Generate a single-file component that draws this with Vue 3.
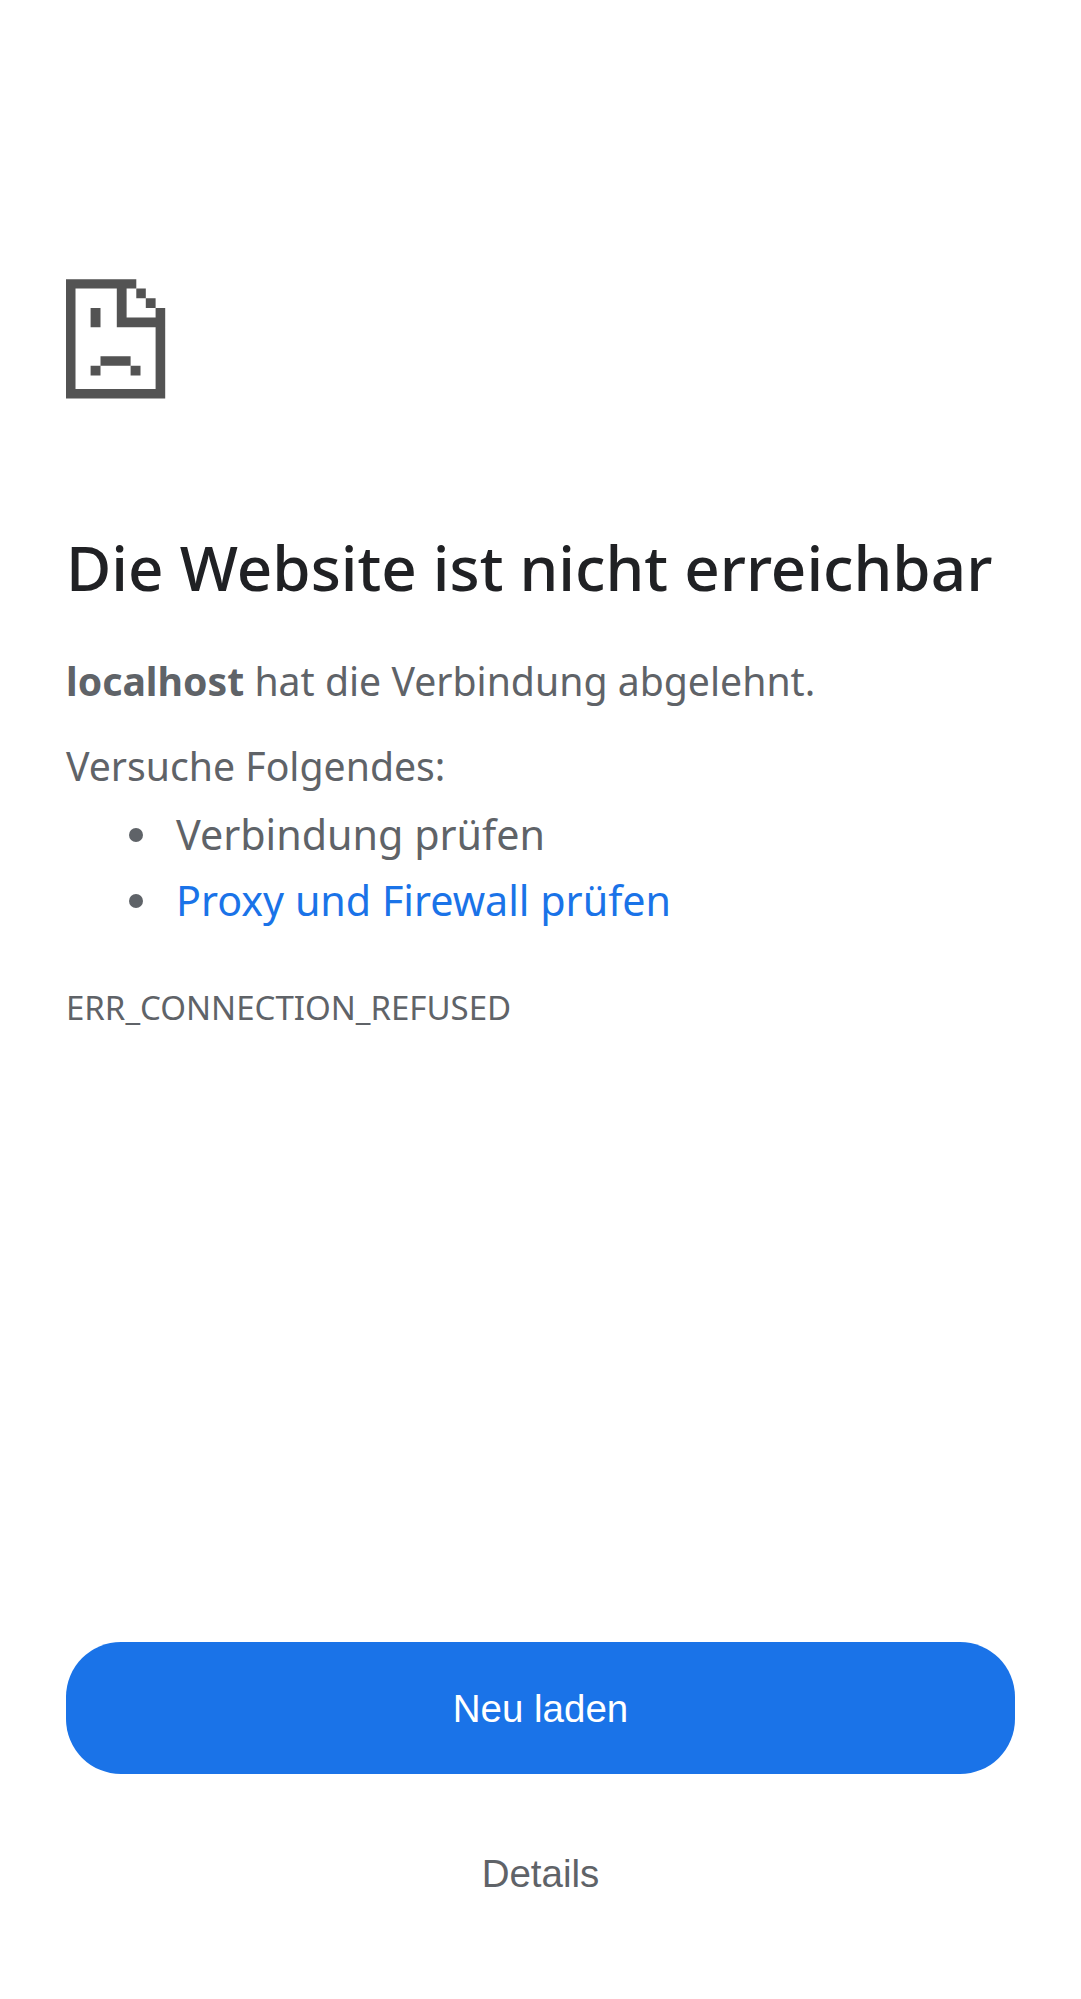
<script setup>
const suggestions = [
  { text: 'Verbindung prüfen', link: false },
  { text: 'Proxy und Firewall prüfen', link: true },
]
</script>

<template>
  <div class="page">
    <main class="content">
      <svg class="icon" width="100" height="120" viewBox="66 279 100 120" aria-hidden="true">
        <path
          fill="#535353"
          fill-rule="evenodd"
          d="M66 279.2H136.3V288.6H126.6V317.5H155.6V307.9H165.2V398.5H66ZM75.5 288.6V389.1H155.6V327.2H116.8V288.6Z"
        />
        <path
          fill="#535353"
          d="M136.3 288.6H145.8V298.3H136.3ZM145.8 298.3H155.6V307.9H145.8ZM90.6 307.9H100.5V327.2H90.6ZM100.5 356.2H130.6V365.7H100.5ZM90.6 365.7H100.5V375.5H90.6ZM130.6 365.7H140.5V375.5H130.6Z"
        />
      </svg>
      <h1>Die Website ist nicht erreichbar</h1>
      <p class="summary"><strong>localhost</strong> hat die Verbindung abgelehnt.</p>
      <p class="try">Versuche Folgendes:</p>
      <ul>
        <li v-for="item in suggestions" :key="item.text">
          <a v-if="item.link">{{ item.text }}</a>
          <span v-else>{{ item.text }}</span>
        </li>
      </ul>
      <div class="code">ERR_CONNECTION_REFUSED</div>
    </main>
    <div class="buttons">
      <button class="reload">Neu laden</button>
      <button class="details">Details</button>
    </div>
  </div>
</template>

<style>
body {
  margin: 0;
  background: #fff;
}
</style>

<style scoped>
.page {
  box-sizing: border-box;
  height: 1999px;
  padding: 279px 66px 59px;
  display: flex;
  flex-direction: column;
  justify-content: space-between;
  color: #5f6368;
  font-family: 'Noto Sans', sans-serif;
}
.icon {
  display: block;
}
h1 {
  margin: 131px 0 0;
  color: #202124;
  font-size: 61.95px;
  font-weight: 500;
  line-height: 74px;
  white-space: nowrap;
}
p {
  margin: 0;
  font-size: 39.2px;
  line-height: 60px;
}
.summary {
  margin-top: 47px;
}
.try {
  margin-top: 25px;
}
ul {
  margin: 5px 0 0;
  padding: 0 0 0 63px;
  list-style: none;
  font-size: 41.25px;
  line-height: 66px;
}
li {
  display: flex;
  align-items: center;
}
li::before {
  content: '';
  width: 14px;
  height: 14px;
  margin: 1px 33px 0 0;
  border-radius: 50%;
  background: #5f6368;
}
a {
  color: #1a73e8;
}
.code {
  margin-top: 50px;
  font-size: 33px;
  line-height: 50px;
}
.buttons {
  display: flex;
  flex-direction: column;
  gap: 34.5px;
}
button {
  height: 132px;
  padding: 0;
  border: 0;
  border-radius: 55px;
  font-family: 'Liberation Sans', sans-serif;
  font-size: 38.5px;
}
.reload {
  height: 131.5px;
  padding-top: 2.5px;
  background: #1a73e8;
  color: #fff;
}
.details {
  background: none;
  color: #5f6368;
}
</style>
